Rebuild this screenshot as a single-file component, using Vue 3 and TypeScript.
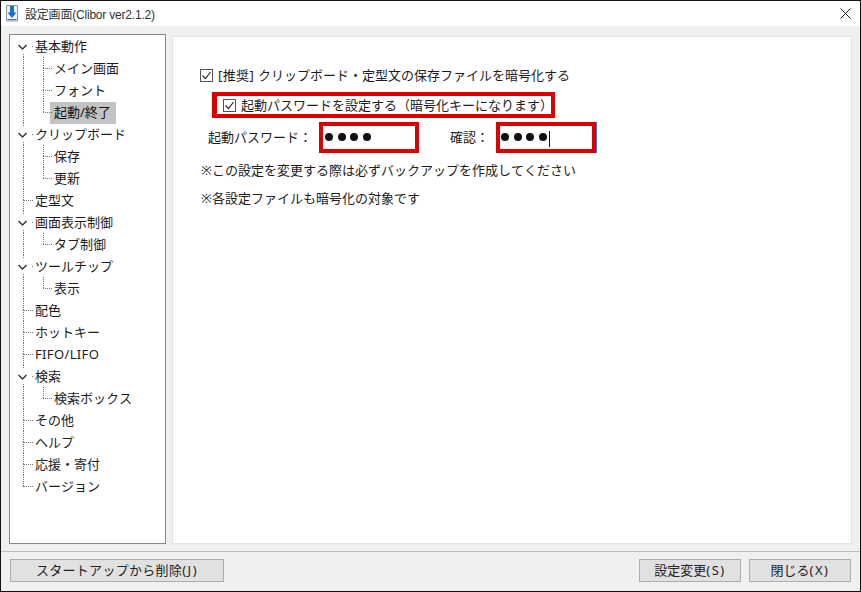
<script setup lang="ts">
interface Row {
  label: string
  level: 0 | 1
  open?: boolean
  selected?: boolean
  rootUp: boolean
  rootDown: boolean
  childDown?: boolean
}
const raw: Array<[string, 0 | 1, boolean?, boolean?]> = [
  ['基本動作', 0, true],
  ['メイン画面', 1],
  ['フォント', 1],
  ['起動/終了', 1, false, true],
  ['クリップボード', 0, true],
  ['保存', 1],
  ['更新', 1],
  ['定型文', 0],
  ['画面表示制御', 0, true],
  ['タブ制御', 1],
  ['ツールチップ', 0, true],
  ['表示', 1],
  ['配色', 0],
  ['ホットキー', 0],
  ['FIFO/LIFO', 0],
  ['検索', 0, true],
  ['検索ボックス', 1],
  ['その他', 0],
  ['ヘルプ', 0],
  ['応援・寄付', 0],
  ['バージョン', 0],
]
const rows: Row[] = raw.map(([label, level, open, selected], i) => ({
  label,
  level,
  open,
  selected,
  rootUp: i > 0,
  rootDown: i < raw.length - 1,
  childDown: level === 1 && raw[i + 1]?.[1] === 1,
}))
const dots = [0, 1, 2, 3]
</script>

<template>
  <div class="window">
    <header class="titlebar">
      <svg class="app-icon" width="12" height="17" viewBox="0 0 12 17">
        <path d="M.5.500h11v15.500H.5z" fill="#eef2f6" stroke="#8d99a6" />
        <path d="M4 1h4v6.500h2.500L6 13 1.500 7.500H4z" fill="#1c6fc9" />
        <path d="M1.500 14.500h9" stroke="#5f6c78" />
      </svg>
      <span class="title">設定画面(Clibor ver2.1.2)</span>
      <svg class="close" width="11" height="11" viewBox="0 0 11 11">
        <path d="M.5.500l10 10M10.500.500l-10 10" stroke="#222" stroke-width="1" fill="none" />
      </svg>
    </header>

    <main class="main">
      <nav class="tree">
        <div v-for="row in rows" :key="row.label" class="row" :class="`level-${row.level}`">
          <i v-if="row.rootUp" class="line root-up" />
          <i v-if="row.rootDown" class="line root-down" />
          <i class="line h-line" />
          <template v-if="row.level === 1">
            <i class="line child-up" />
            <i v-if="row.childDown" class="line child-down" />
          </template>
          <svg v-if="row.open" class="chevron" width="14" height="16" viewBox="0 0 14 16">
            <path d="M.5 7l4 4 4-4" fill="none" stroke="#3a3a3a" stroke-width="1.500" />
          </svg>
          <span class="label" :class="{ selected: row.selected, latin: row.label === 'FIFO/LIFO' }">{{ row.label }}</span>
        </div>
      </nav>

      <section class="panel">
        <label class="check-row first">
          <span class="checkbox">
            <svg width="13" height="13" viewBox="0 0 13 13">
              <path d="M2.500 6.500l3 3.200 5-6.700" fill="none" stroke="#222" stroke-width="1.100" />
            </svg>
          </span>
          <span><span class="tag">[推奨] </span>クリップボード・定型文の保存ファイルを暗号化する</span>
        </label>

        <label class="check-row highlighted">
          <span class="checkbox">
            <svg width="13" height="13" viewBox="0 0 13 13">
              <path d="M2.500 6.500l3 3.200 5-6.700" fill="none" stroke="#222" stroke-width="1.100" />
            </svg>
          </span>
          <span class="nowrap">起動パスワードを設定する（暗号化キーになります）</span>
        </label>

        <div class="password-row">
          <span class="field-label first-label">起動パスワード：</span>
          <div class="pw-box first-box">
            <i v-for="d in dots" :key="d" class="dot" />
          </div>
          <span class="field-label second-label">確認：</span>
          <div class="pw-box second-box">
            <i v-for="d in dots" :key="d" class="dot" />
            <i class="caret" />
          </div>
        </div>

        <p class="note note-one">※この設定を変更する際は必ずバックアップを作成してください</p>
        <p class="note note-two">※各設定ファイルも暗号化の対象です</p>
      </section>
    </main>

    <footer class="footer">
      <button class="btn startup">スタートアップから削除<span class="accel">(J)</span></button>
      <div class="spacer" />
      <button class="btn apply">設定変更<span class="accel">(S)</span></button>
      <button class="btn closebtn">閉じる<span class="accel">(X)</span></button>
    </footer>
  </div>
</template>

<style>
html, body { margin: 0; background: #fff; }
</style>

<style scoped>
.window {
  width: 861px;
  height: 592px;
  box-sizing: border-box;
  border: 1px solid #111;
  background: #f0f0f0;
  display: flex;
  flex-direction: column;
  font-family: "Noto Sans", "Noto Sans CJK JP", sans-serif;
  font-size: 13px;
  font-kerning: none;
  color: #1c1c1c;
}
.titlebar {
  height: 25px;
  flex: none;
  background: #fff;
  display: flex;
  align-items: center;
  padding-left: 5px;
  padding-right: 9px;
}
.app-icon { flex: none; }
.title {
  margin-left: 7px;
  font-size: 12px;
  letter-spacing: -0.2px;
  color: #333;
  font-family: "Liberation Sans", "Noto Sans CJK JP", sans-serif;
}
.close { margin-left: auto; }
.main {
  flex: 1;
  min-height: 0;
  display: flex;
  padding: 8px 8px 7px 8px;
  gap: 6px;
}
.tree {
  width: 157px;
  box-sizing: border-box;
  flex: none;
  background: #fff;
  border: 1px solid #828790;
}
.row {
  position: relative;
  height: 22px;
  display: flex;
  align-items: center;
}
.level-0 { padding-left: 24px; }
.level-1 { padding-left: 43px; }
.label { padding: 0 1px; line-height: 22px; white-space: nowrap; }
.label.latin { letter-spacing: 0.35px; }
.label.selected {
  background: #c3c3c3;
  line-height: 20px;
  padding: 0 5px 2px 4px;
  margin: 2px 0 0 -3px;
  color: #111;
}
.line { position: absolute; display: block; }
.root-up, .root-down, .child-up, .child-down { border-left: 1px dotted #777; }
.root-up { left: 13px; top: 0; height: 11px; }
.root-down { left: 13px; top: 11px; height: 11px; }
.child-up { left: 33px; top: 0; height: 11px; }
.child-down { left: 33px; top: 11px; height: 11px; }
.h-line { border-top: 1px dotted #777; top: 11px; height: 0; }
.level-0 .h-line { left: 13px; width: 10px; }
.level-1 .h-line { left: 33px; width: 9px; }
.chevron { position: absolute; left: 8px; top: 3px; background: #fff; }

.panel {
  flex: 1;
  margin-top: 2px;
  background: #fff;
  border: 1px solid #e2e2e2;
  padding-left: 27px;
  display: flex;
  flex-direction: column;
  align-items: flex-start;
}
.check-row { display: flex; align-items: center; gap: 5px; line-height: 20px; }
.tag { letter-spacing: 0.4px; }
.first { margin-top: 28px; }
.checkbox {
  width: 11px;
  height: 11px;
  border: 1px solid #555;
  background: #fff;
  position: relative;
  flex: none;
}
.checkbox svg { position: absolute; left: -1px; top: -1px; }
.highlighted {
  margin: 7px 0 0 12px;
  border: 4px solid #dd0000;
  border-left-width: 5px;
  padding: 0 0 0 6px;
  gap: 5px;
  width: 343px;
  height: 26px;
  box-sizing: border-box;
  overflow: hidden;
}
.nowrap { white-space: nowrap; }
.password-row { display: flex; align-items: flex-start; margin: 4px 0 0 0; }
.field-label { white-space: nowrap; line-height: 30px; }
.first-label { margin-left: 8px; width: 111px; }
.second-label { margin-left: 31px; width: 46px; }
.pw-box {
  width: 100px;
  height: 31px;
  box-sizing: border-box;
  border: 4px solid #dd0000;
  background: #fff;
  display: flex;
  align-items: center;
  gap: 4.600px;
  padding-left: 2px;
}
.second-box { padding-left: 1px; box-shadow: 1px 0 0 #2f7fd0; }
.dot { width: 8px; height: 8px; border-radius: 50%; background: #111; display: block; margin-top: -2px; }
.caret { width: 1px; height: 16px; background: #111; margin: 3px 0 0 -2px; }
.note { margin: 0 0 0 1px; line-height: 20px; white-space: nowrap; }
.note-one { margin-top: 7px; }
.note-two { margin-top: 8px; }

.footer {
  flex: none;
  height: 40px;
  box-sizing: border-box;
  border-top: 1px solid #bdbdbd;
  display: flex;
  align-items: flex-start;
  padding: 7px 9px 0 9px;
  gap: 8px;
}
.spacer { flex: 1; }
.btn {
  height: 23px;
  box-sizing: border-box;
  background: #e1e1e1;
  border: 1px solid #adadad;
  font: inherit;
  font-kerning: none;
  color: #222;
  padding: 0;
  line-height: 21px;
}
.accel { letter-spacing: 1.500px; }
.startup { width: 214px; letter-spacing: 0.3px; }
.apply { width: 102px; }
.closebtn { width: 102px; }
</style>
